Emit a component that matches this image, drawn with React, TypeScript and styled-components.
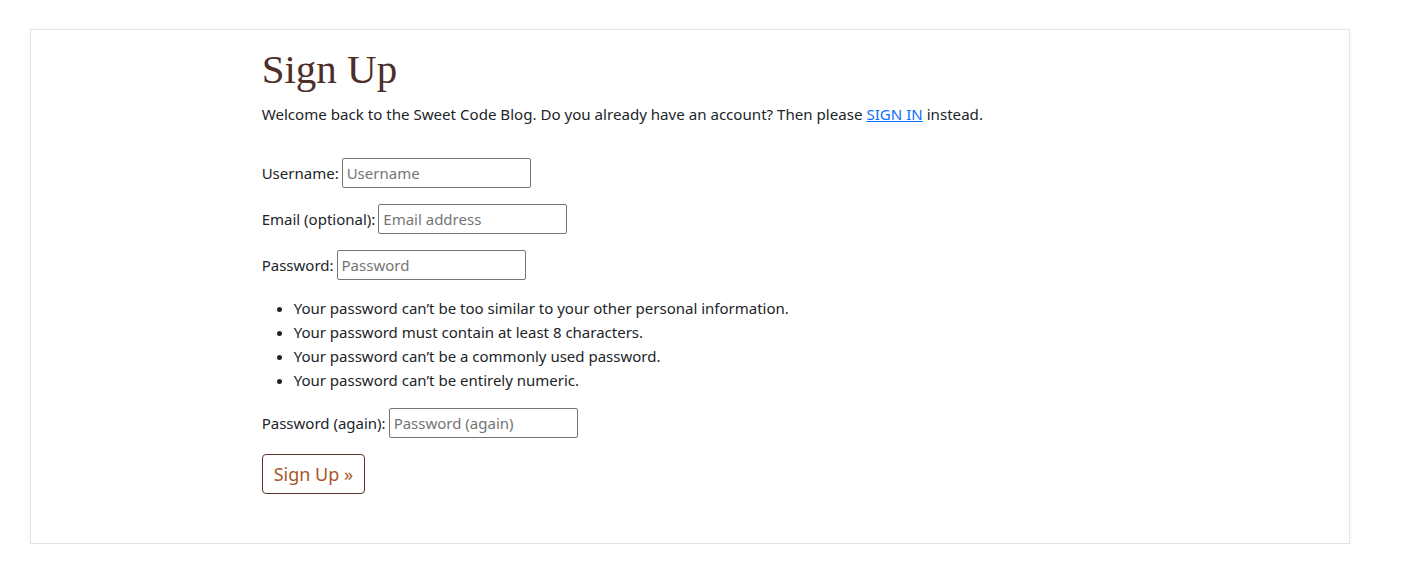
import styled, { createGlobalStyle } from 'styled-components';

const GlobalStyle = createGlobalStyle`
  body {
    margin: 0;
    background: #fff;
    font-family: "Noto Sans", "Open Sans", sans-serif;
    font-size: 15px;
    line-height: 24px;
    color: #212529;
  }
`;

const Page = styled.div`
  padding: 29px 0 0 30px;
`;

const Card = styled.div`
  width: 1318px;
  border: 1px solid #e3e3e3;
  box-shadow: 0 1px 4px rgba(0, 0, 0, 0.06);
  background: #fff;
  display: grid;
  grid-template-columns: repeat(12, 1fr);
`;

const Column = styled.div`
  grid-column: 3 / span 8;
  padding: 15px 12px 49px 11px;
`;

const Title = styled.h1`
  margin: 0 0 9px;
  font-family: "Liberation Serif", "DejaVu Serif", serif;
  font-weight: 400;
  font-size: 41px;
  line-height: 48px;
  color: #4e2e28;
`;

const Intro = styled.p`
  margin: 0 0 32px;
  font-size: 15.1px;
`;

const Link = styled.a`
  color: #0d6efd;
  text-decoration: underline;
`;

const Row = styled.p`
  margin: 0 0 16px;
  display: flex;
  align-items: center;
  gap: 3px;
`;

const Input = styled.input`
  width: 189px;
  height: 30px;
  box-sizing: border-box;
  border: 1px solid #767676;
  border-radius: 2px;
  padding: 0 4px;
  font-family: inherit;
  font-size: 15px;
  color: #212529;

  &::placeholder {
    color: #757575;
  }
`;

const Rules = styled.ul`
  margin: 0 0 16px;
  padding-left: 32px;
`;

const Button = styled.button`
  height: 40px;
  padding: 0 11px;
  background: #fff;
  border: 1px solid #5a342c;
  border-radius: 4px;
  font-family: inherit;
  font-size: 18px;
  color: #a8562a;
  cursor: pointer;
`;

const fields = [
  { label: 'Username:', placeholder: 'Username', type: 'text' },
  { label: 'Email (optional):', placeholder: 'Email address', type: 'email' },
  { label: 'Password:', placeholder: 'Password', type: 'password' },
];

const rules = [
  'Your password can’t be too similar to your other personal information.',
  'Your password must contain at least 8 characters.',
  'Your password can’t be a commonly used password.',
  'Your password can’t be entirely numeric.',
];

export default function App() {
  return (
    <>
      <GlobalStyle />
      <Page>
        <Card>
          <Column>
            <Title>Sign Up</Title>
            <Intro>
              Welcome back to the Sweet Code Blog. Do you already have an account? Then please{' '}
              <Link href="#">SIGN IN</Link> instead.
            </Intro>
            <form onSubmit={e => e.preventDefault()}>
              {fields.map(f => (
                <Row key={f.label}>
                  <label>{f.label}</label>
                  <Input type={f.type} placeholder={f.placeholder} />
                </Row>
              ))}
              <Rules>
                {rules.map(r => (
                  <li key={r}>{r}</li>
                ))}
              </Rules>
              <Row>
                <label>Password (again):</label>
                <Input type="password" placeholder="Password (again)" />
              </Row>
              <Button type="submit">Sign Up »</Button>
            </form>
          </Column>
        </Card>
      </Page>
    </>
  );
}
